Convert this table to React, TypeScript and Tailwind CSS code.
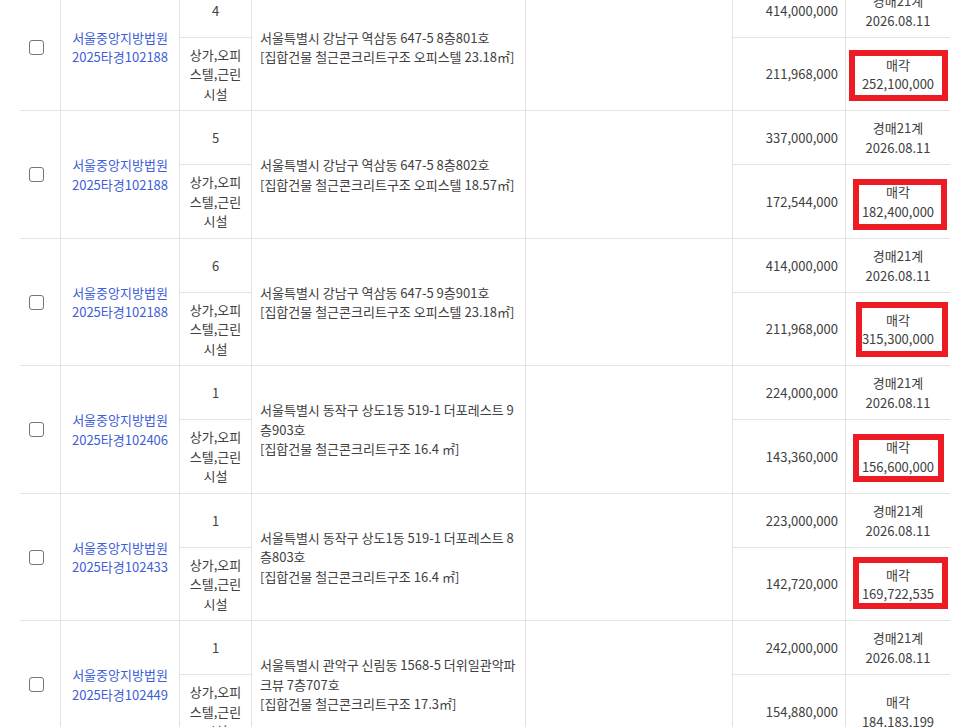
import React from "react";

type Rec = {
  no: string;
  caseNo: string;
  addr: string[];
  appraisal: string;
  minPrice: string;
  sale: string;
  lowerH: string;
  box: string | null;
};

const records: Rec[] = [
  {
    no: "4",
    caseNo: "2025타경102188",
    addr: ["서울특별시 강남구 역삼동 647-5 8층801호", "[집합건물 철근콘크리트구조 오피스텔 23.18㎡]"],
    appraisal: "414,000,000",
    minPrice: "211,968,000",
    sale: "252,100,000",
    lowerH: "h-[73px]",
    box: "left-[3px] top-[12px] w-[99px] h-[51px]",
  },
  {
    no: "5",
    caseNo: "2025타경102188",
    addr: ["서울특별시 강남구 역삼동 647-5 8층802호", "[집합건물 철근콘크리트구조 오피스텔 18.57㎡]"],
    appraisal: "337,000,000",
    minPrice: "172,544,000",
    sale: "182,400,000",
    lowerH: "h-[74px]",
    box: "left-[7px] top-[14px] w-[94px] h-[51px]",
  },
  {
    no: "6",
    caseNo: "2025타경102188",
    addr: ["서울특별시 강남구 역삼동 647-5 9층901호", "[집합건물 철근콘크리트구조 오피스텔 23.18㎡]"],
    appraisal: "414,000,000",
    minPrice: "211,968,000",
    sale: "315,300,000",
    lowerH: "h-[73px]",
    box: "left-[10px] top-[9px] w-[92px] h-[55px]",
  },
  {
    no: "1",
    caseNo: "2025타경102406",
    addr: ["서울특별시 동작구 상도1동 519-1 더포레스트 9", "층903호", "[집합건물 철근콘크리트구조 16.4 ㎡]"],
    appraisal: "224,000,000",
    minPrice: "143,360,000",
    sale: "156,600,000",
    lowerH: "h-[74px]",
    box: "left-[7px] top-[14px] w-[91px] h-[48px]",
  },
  {
    no: "1",
    caseNo: "2025타경102433",
    addr: ["서울특별시 동작구 상도1동 519-1 더포레스트 8", "층803호", "[집합건물 철근콘크리트구조 16.4 ㎡]"],
    appraisal: "223,000,000",
    minPrice: "142,720,000",
    sale: "169,722,535",
    lowerH: "h-[73px]",
    box: "left-[7px] top-[9px] w-[95px] h-[52px]",
  },
  {
    no: "1",
    caseNo: "2025타경102449",
    addr: ["서울특별시 관악구 신림동 1568-5 더위일관악파", "크뷰 7층707호", "[집합건물 철근콘크리트구조 17.3㎡]"],
    appraisal: "242,000,000",
    minPrice: "154,880,000",
    sale: "184,183,199",
    lowerH: "h-[74px]",
    box: null,
  },
];

const line = "border-[#e3e3e3]";

export default function App() {
  return (
    <div
      className="min-h-screen bg-white overflow-hidden text-[13px] leading-[19.5px] text-[#404040]"
      style={{ fontFamily: '"Noto Sans CJK KR", "Noto Sans", sans-serif' }}
    >
      <table className="ml-[20px] -mt-[16px] w-[930px] table-fixed border-separate border-spacing-0">
        <colgroup>
          <col className="w-[41px]" />
          <col className="w-[119px]" />
          <col className="w-[72px]" />
          <col className="w-[274px]" />
          <col className="w-[207px]" />
          <col className="w-[113px]" />
          <col className="w-[104px]" />
        </colgroup>
        <tbody>
          {records.map((r, i) => (
            <React.Fragment key={i}>
              <tr className="h-[54px]">
                <td rowSpan={2} className={`border-r border-b ${line} align-middle pl-[9px]`}>
                  <div className="flex items-center">
                    <span className="block w-[15px] h-[15px] border border-[#767676] rounded-[3px] bg-white" />
                  </div>
                </td>
                <td rowSpan={2} className={`border-r border-b ${line} align-middle text-center text-[#3d60d8]`}>
                  서울중앙지방법원
                  <br />
                  {r.caseNo}
                </td>
                <td className={`border-r border-b ${line} align-middle text-center`}>{r.no}</td>
                <td rowSpan={2} className={`border-r border-b ${line} align-middle pl-[8px] whitespace-nowrap`}>
                  {r.addr.map((a, j) => (
                    <div key={j}>{a}</div>
                  ))}
                </td>
                <td rowSpan={2} className={`border-r border-b ${line}`} />
                <td className={`border-r border-b ${line} align-middle text-right pr-[7px]`}>{r.appraisal}</td>
                <td className={`border-b ${line} align-middle text-center`}>
                  경매21계
                  <br />
                  2026.08.11
                </td>
              </tr>
              <tr className={r.lowerH}>
                <td className={`border-r border-b ${line} align-middle text-center`}>
                  상가,오피
                  <br />
                  스텔,근린
                  <br />
                  시설
                </td>
                <td className={`border-r border-b ${line} align-middle text-right pr-[7px]`}>{r.minPrice}</td>
                <td className={`relative border-b ${line} align-middle text-center`}>
                  매각
                  <br />
                  {r.sale}
                  {r.box && (
                    <span className={`absolute ${r.box} border-[6px] border-[#ed1c24] pointer-events-none`} />
                  )}
                </td>
              </tr>
            </React.Fragment>
          ))}
        </tbody>
      </table>
    </div>
  );
}
